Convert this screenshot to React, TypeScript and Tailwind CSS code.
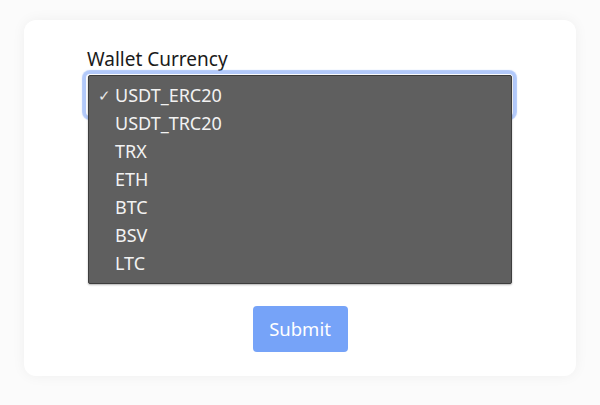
import React from "react";

const options = ["USDT_ERC20", "USDT_TRC20", "TRX", "ETH", "BTC", "BSV", "LTC"];

export default function App() {
  return (
    <div
      className="w-[600px] h-[405px] bg-[#fbfbfb] pt-[20px] px-[24px]"
      style={{ fontFamily: "'Noto Sans', Roboto, sans-serif" }}
    >
      <div className="h-[356px] bg-white rounded-[12px] shadow-[0_0_14px_rgba(0,0,0,0.05)] pt-[27px] pl-[62px] flex flex-col">
        <label className="text-[19px] leading-[24px] text-[#1a1a1a] ml-[1px]">Wallet Currency</label>
        <div className="relative mt-[3px] w-[427px] h-[42px]">
          <div className="absolute inset-0 rounded-[4px] bg-white shadow-[0_0_1px_4px_rgba(126,165,246,0.6)]" />
          <div className="absolute left-[2px] top-[1px] w-[424px] bg-[#5f5f5f] border border-[#3d3d3d] rounded-[2px] pt-[5px] pb-[6px] shadow-[0_1px_2px_rgba(0,0,0,0.3)]">
            {options.map((o, i) => (
              <div key={o} className="h-[28px] flex items-center text-[18px] text-[#f2f2f2]">
                <span className="w-[26px] pl-[9px] text-[15px] font-light text-[#e8e8e8]">{i === 0 ? "✓" : ""}</span>
                <span>{o}</span>
              </div>
            ))}
          </div>
        </div>
        <div className="flex justify-center mt-[190px] pr-[62px]">
          <button className="w-[95px] h-[46px] rounded-[4px] bg-[#76a3f8] text-white text-[18.5px]">
            Submit
          </button>
        </div>
      </div>
    </div>
  );
}
